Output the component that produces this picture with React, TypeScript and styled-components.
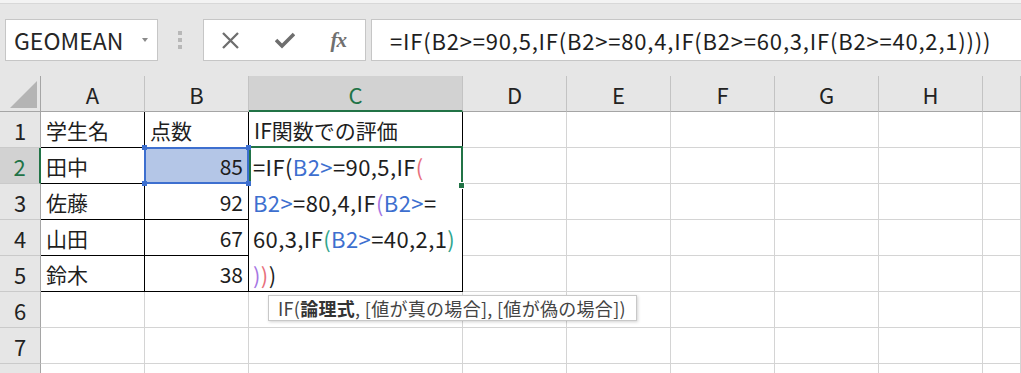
import React from 'react'
import styled, { createGlobalStyle } from 'styled-components'

const FONT = `"Noto Sans CJK JP", "Noto Sans", sans-serif`
const GREEN = '#217346'
const HEAD = '#e6e6e6'
const HEAD_SEL = '#d2d2d2'
const GRID = '#d4d4d4'
const REF = '#3d6fcf'

const GlobalStyle = createGlobalStyle`
  html, body {
    margin: 0;
    padding: 0;
    background: #fff;
    overflow: hidden;
  }
  body {
    font-family: ${FONT};
    color: #1e1e1e;
  }
`

// ---- formula bar ----

const Toolbar = styled.div`
  display: flex;
  align-items: center;
  height: 76px;
  box-sizing: border-box;
  padding: 4px 0 0 5px;
  background: linear-gradient(#f3f3f3 0 3px, #d8d8d8 3px 4px, ${HEAD} 4px);
`

const NameBox = styled.div`
  display: flex;
  align-items: center;
  justify-content: space-between;
  width: 153px;
  height: 42px;
  box-sizing: border-box;
  padding: 0 9px 0 8px;
  background: #fff;
  border: 1px solid #c6c6c6;
  font-size: 23px;
  color: #262626;
`

const DropArrow = styled.span`
  width: 0;
  height: 0;
  border-left: 3.5px solid transparent;
  border-right: 3.5px solid transparent;
  border-top: 4px solid #8a8a8a;
`

const Grip = styled.div`
  display: flex;
  flex-direction: column;
  gap: 3px;
  margin: 0 21px 0 20px;
`

const GripDot = styled.span`
  width: 4px;
  height: 4px;
  background: #b8b8b8;
`

const ButtonsBox = styled.div`
  display: flex;
  align-items: center;
  width: 163px;
  height: 42px;
  box-sizing: border-box;
  background: #fff;
  border: 1px solid #c6c6c6;
`

const IconSlot = styled.div`
  display: flex;
  align-items: center;
  justify-content: center;
  width: 54px;
  height: 100%;
  color: #6e6e6e;
`

const Fx = styled.span`
  font-family: "Liberation Serif", serif;
  font-style: italic;
  font-weight: 700;
  font-size: 21px;
  color: #707070;
  letter-spacing: -1px;
`

const FormulaBox = styled.div`
  flex: 1;
  display: flex;
  align-items: center;
  height: 42px;
  margin: 0 -10px 0 5px;
  box-sizing: border-box;
  padding-left: 18px;
  background: #fff;
  border: 1px solid #c6c6c6;
  font-size: 22px;
  letter-spacing: 0.8px;
  color: #1e1e1e;
  white-space: nowrap;
`

// ---- sheet ----

const SheetWrap = styled.div`
  position: relative;
`

const Sheet = styled.div`
  display: grid;
  grid-template-columns: 41px 104px 104px 214px repeat(5, 104px) 1fr;
  grid-template-rows: repeat(9, 36px);
  font-size: 21px;
`

type Pos = { $r: number; $c: number }

const place = (p: Pos) => `grid-row: ${p.$r}; grid-column: ${p.$c};`

const Corner = styled.div<Pos>`
  ${place}
  position: relative;
  background: ${HEAD};
  border-right: 1px solid #a5a5a5;
  border-bottom: 1px solid #a5a5a5;
  box-sizing: border-box;
`

const ColHead = styled.div<Pos & { $sel?: boolean }>`
  ${place}
  display: flex;
  align-items: center;
  justify-content: center;
  box-sizing: border-box;
  font-size: 22px;
  background: ${(p) => (p.$sel ? HEAD_SEL : HEAD)};
  color: ${(p) => (p.$sel ? GREEN : '#222')};
  border-right: 1px solid #c3c3c3;
  border-bottom: ${(p) => (p.$sel ? `2px solid ${GREEN}` : '1px solid #a5a5a5')};
  padding-top: ${(p) => (p.$sel ? '1px' : '0')};
`

const RowHead = styled.div<Pos & { $sel?: boolean }>`
  ${place}
  display: flex;
  align-items: center;
  justify-content: center;
  box-sizing: border-box;
  font-size: 22px;
  background: ${(p) => (p.$sel ? HEAD_SEL : HEAD)};
  color: ${(p) => (p.$sel ? GREEN : '#222')};
  border-bottom: 1px solid #cacaca;
  border-right: ${(p) => (p.$sel ? `2px solid ${GREEN}` : '1px solid #a5a5a5')};
`

const Cell = styled.div<Pos & { $num?: boolean; $table?: boolean; $fill?: string }>`
  ${place}
  display: flex;
  align-items: center;
  justify-content: ${(p) => (p.$num ? 'flex-end' : 'flex-start')};
  box-sizing: border-box;
  padding: 0 5px;
  white-space: nowrap;
  background: ${(p) => p.$fill || '#fff'};
  border-right: 1px solid ${(p) => (p.$table ? '#000' : GRID)};
  border-bottom: 1px solid ${(p) => (p.$table ? '#000' : GRID)};
`

const RefFrame = styled.div<Pos>`
  ${place}
  position: relative;
  z-index: 3;
  margin: -1px 0 0 -1px;
  border: 2px solid ${REF};
`

const RefHandle = styled.span<{ $top?: boolean; $left?: boolean }>`
  position: absolute;
  width: 5px;
  height: 5px;
  background: ${REF};
  ${(p) => (p.$top ? 'top: -4px;' : 'bottom: -4px;')}
  ${(p) => (p.$left ? 'left: -4px;' : 'right: -4px;')}
`

const ActiveFrame = styled.div<Pos>`
  ${place}
  position: relative;
  z-index: 2;
  margin: -2px 0 0 0;
  height: 38px;
  border: 2px solid ${GREEN};
  border-bottom: none;
`

const FillHandle = styled.span`
  position: absolute;
  right: -4px;
  bottom: -3px;
  width: 5px;
  height: 5px;
  background: ${GREEN};
  border: 1px solid #fff;
`

const Editor = styled.div`
  grid-row: 3 / 7;
  grid-column: 4;
  z-index: 1;
  box-sizing: border-box;
  padding-left: 4px;
  background: #fff;
  border-right: 1px solid #000;
  border-bottom: 1px solid #000;
  font-size: 22px;
  letter-spacing: 0.4px;
  line-height: 36px;
  white-space: nowrap;
  overflow: hidden;
`

const Tok = styled.span<{ $c?: string }>`
  color: ${(p) => p.$c || '#1e1e1e'};
`

const Tooltip = styled.div`
  position: absolute;
  z-index: 5;
  top: 219px;
  left: 268px;
  display: flex;
  align-items: center;
  width: 369px;
  height: 26px;
  box-sizing: border-box;
  padding-left: 9px;
  background: #fff;
  border: 1px solid #c8c8c8;
  box-shadow: 1px 1px 3px rgba(0, 0, 0, 0.18);
  font-size: 18px;
  letter-spacing: 0.3px;
  color: #444;
  white-space: nowrap;
`

const Bold = styled.b`
  font-weight: 700;
  color: #333;
`

const XIcon = () => (
  <svg width="19" height="19" viewBox="0 0 19 19">
    <path d="M2 2 L17 17 M17 2 L2 17" stroke="currentColor" strokeWidth="2.3" fill="none" />
  </svg>
)

const CheckIcon = () => (
  <svg width="20" height="18" viewBox="0 0 20 18">
    <path d="M1 9 L7 15 L19 3" stroke="currentColor" strokeWidth="3.6" fill="none" />
  </svg>
)

const CornerTriangle = () => (
  <svg width="41" height="36" viewBox="0 0 41 36" style={{ position: 'absolute', left: 0, top: 0 }}>
    <polygon points="10,32 37,32 37,5" fill="#b4b4b4" />
  </svg>
)

const BLUE = REF
const RED = '#e8707c'
const PURPLE = '#a676e3'
const TEAL = '#2fa58c'

const colLetters = ['A', 'B', 'C', 'D', 'E', 'F', 'G', 'H', '']

const tableRows: [string, string][] = [
  ['学生名', '点数'],
  ['田中', '85'],
  ['佐藤', '92'],
  ['山田', '67'],
  ['鈴木', '38'],
]

export default function App() {
  const cells: React.ReactNode[] = []

  for (let r = 1; r <= 8; r++) {
    const gr = r + 1
    const inTable = r <= 5
    // row 8 only peeks in at the bottom edge, its number is not visible
    cells.push(
      <RowHead key={`rh${r}`} $r={gr} $c={1} $sel={r === 2}>
        {r < 8 ? r : ''}
      </RowHead>
    )
    for (let c = 2; c <= 10; c++) {
      const table = inTable && c <= 4
      let text = ''
      let num = false
      if (inTable && c === 2) text = tableRows[r - 1][0]
      if (inTable && c === 3) {
        text = tableRows[r - 1][1]
        num = r > 1
      }
      if (r === 1 && c === 4) text = 'IF関数での評価'
      cells.push(
        <Cell
          key={`c${r}-${c}`}
          $r={gr}
          $c={c}
          $table={table}
          $num={num}
          $fill={r === 2 && c === 3 ? '#b4c6e7' : undefined}
        >
          {text}
        </Cell>
      )
    }
  }

  return (
    <>
      <GlobalStyle />
      <Toolbar>
        <NameBox>
          GEOMEAN
          <DropArrow />
        </NameBox>
        <Grip>
          <GripDot />
          <GripDot />
          <GripDot />
        </Grip>
        <ButtonsBox>
          <IconSlot>
            <XIcon />
          </IconSlot>
          <IconSlot>
            <CheckIcon />
          </IconSlot>
          <IconSlot>
            <Fx>fx</Fx>
          </IconSlot>
        </ButtonsBox>
        <FormulaBox>=IF(B2&gt;=90,5,IF(B2&gt;=80,4,IF(B2&gt;=60,3,IF(B2&gt;=40,2,1))))</FormulaBox>
      </Toolbar>

      <SheetWrap>
        <Sheet>
          <Corner $r={1} $c={1}>
            <CornerTriangle />
          </Corner>
          {colLetters.map((l, i) => (
            <ColHead key={`h${i}`} $r={1} $c={i + 2} $sel={l === 'C'}>
              {l}
            </ColHead>
          ))}
          {cells}

          <RefFrame $r={3} $c={3}>
            <RefHandle $top $left />
            <RefHandle $top />
            <RefHandle $left />
            <RefHandle />
          </RefFrame>

          <ActiveFrame $r={3} $c={4}>
            <FillHandle />
          </ActiveFrame>

          <Editor>
            <div>
              <Tok>=IF(</Tok>
              <Tok $c={BLUE}>B2&gt;</Tok>
              <Tok>=90,5,IF</Tok>
              <Tok $c={RED}>(</Tok>
            </div>
            <div>
              <Tok $c={BLUE}>B2&gt;</Tok>
              <Tok>=80,4,IF</Tok>
              <Tok $c={PURPLE}>(</Tok>
              <Tok $c={BLUE}>B2&gt;</Tok>
              <Tok>=</Tok>
            </div>
            <div>
              <Tok>60,3,IF</Tok>
              <Tok $c={TEAL}>(</Tok>
              <Tok $c={BLUE}>B2&gt;</Tok>
              <Tok>=40,2,1</Tok>
              <Tok $c={TEAL}>)</Tok>
            </div>
            <div>
              <Tok $c={PURPLE}>)</Tok>
              <Tok $c={RED}>)</Tok>
              <Tok>)</Tok>
            </div>
          </Editor>
        </Sheet>

        <Tooltip>
          IF(<Bold>論理式</Bold>, [値が真の場合], [値が偽の場合])
        </Tooltip>
      </SheetWrap>
    </>
  )
}
